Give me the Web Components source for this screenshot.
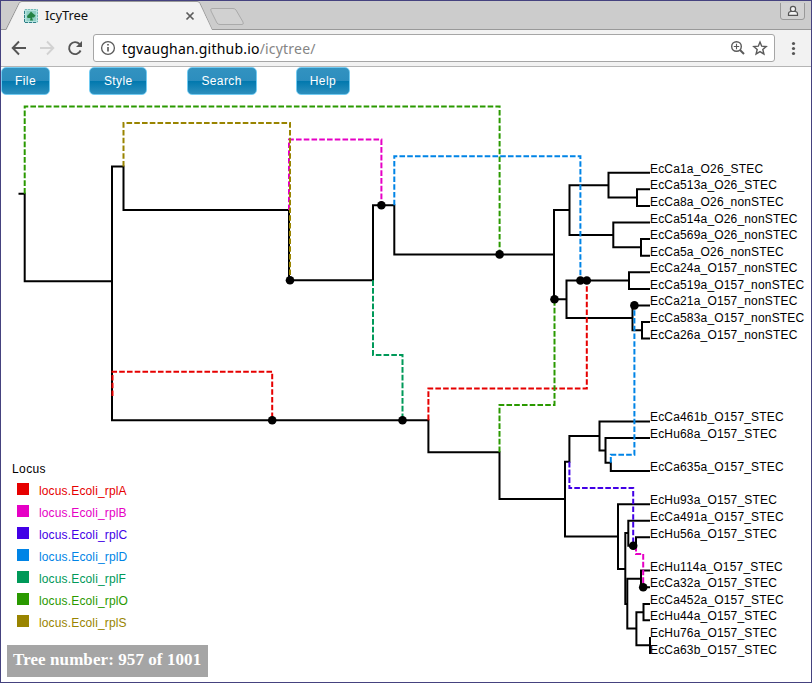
<!DOCTYPE html>
<html lang="en"><head><meta charset="utf-8"><title>IcyTree</title>
<style>html,body{margin:0;height:100%;overflow:hidden;background:#fff}</style></head>
<body>
<browser-window>
  <tab-strip slot="tabs">IcyTree</tab-strip>
  <address-bar slot="bar"><span>tgvaughan.github.io</span><span slot="path">/icytree/</span></address-bar>
  <menu-bar>
    <menu-button style="--w:49px">File</menu-button>
    <menu-button style="--w:58px">Style</menu-button>
    <menu-button style="--w:70px">Search</menu-button>
    <menu-button style="--w:54px">Help</menu-button>
  </menu-bar>
  <tree-canvas>
    <locus-legend></locus-legend>
    <status-box>Tree number: 957 of 1001</status-box>
  </tree-canvas>
</browser-window>
<script>
class Base extends HTMLElement{
  constructor(){super();this.attachShadow({mode:'open'}).innerHTML=this.view()}
}
customElements.define('browser-window',class extends Base{view(){return `
<style>:host{display:flex;flex-direction:column;box-sizing:border-box;width:812px;height:683px;border:1px solid #45427f;background:#fff;overflow:hidden}</style>
<slot name="tabs"></slot><slot name="bar"></slot><slot></slot>`}});

customElements.define('tab-strip',class extends Base{view(){return `
<style>
:host{display:grid;height:29px;flex:none;background:#ccc;font:14px "Noto Sans",sans-serif;color:#111}
svg,.row{grid-area:1/1}
.row{display:flex;align-items:center;height:29px;padding-left:44px}
.t{font-size:13px;line-height:29px;width:140px;letter-spacing:-.1px}
</style>
<svg width="810" height="29" viewBox="1 1 810 29">
<path d="M0 29.5H6L19 3.5Q20 1.500 22 1.500H197Q199 1.500 200 3.500L212 29.500H812" fill="none" stroke="#999"/>
<path d="M6.500 30L19.500 3.500Q20.500 2 22 2H197Q198.500 2 199.500 3.500L212 30Z" fill="#f2f2f2"/>
<path d="M212 8.500H233Q235 8.500 236 10L243 22Q244 24.500 242 24.500H220Q218 24.500 217 23L211 11Q210 8.500 212 8.500Z" fill="#d1d1d1" stroke="#aaa"/>
<rect x="24" y="9" width="14" height="14" rx="1.500" fill="#b5e2de"/><path d="M24.500 11V22.500H37" fill="none" stroke="#2f7d86" stroke-dasharray="3 1"/><path d="M25 9.500H37.500V22" fill="none" stroke="#75b9b8" stroke-dasharray="2 1"/>
<rect x="26.500" y="11" width="9.500" height="10" fill="#8fcfc4"/>
<path d="M31 11.500L33 13.500L35.500 15.500L34 17.500H32L33 20.500H30L30.500 18L27.500 18L27 16L29 14Z" fill="#238243"/>
<path d="M186.500 12.500L193.500 19.500M193.500 12.500L186.500 19.500" stroke="#5c5c5c" stroke-width="1.700"/>
<path d="M780.500 3V17Q780.500 19.500 783 19.500H802Q804.500 19.500 804.500 17V3" fill="#d2d2d2" stroke="#999"/>
<path d="M788.500 15.400V13.800Q788.500 11.500 791 11.500H795Q797.500 11.500 797.500 13.800V15.400Z" fill="#f4f4f4" stroke="#555" stroke-width="1.200"/><circle cx="793" cy="8.900" r="2.600" fill="#f4f4f4" stroke="#555" stroke-width="1.200"/>
</svg><div class="row"><span class="t"><slot></slot></span></div>`}});

customElements.define('address-bar',class extends Base{view(){return `
<style>
:host{display:grid;height:37px;flex:none;background:#f2f2f2;font:14px "Noto Sans",sans-serif;color:#000}
svg,.row{grid-area:1/1}
.row{display:flex;align-items:center;padding:0 0 1px 121px;white-space:nowrap;letter-spacing:.2px}
.p{color:#858585}
</style>
<svg width="810" height="37" viewBox="1 30 810 37">
<rect x="93.500" y="34.500" width="681" height="27" rx="2.500" fill="#fff" stroke="#a6a6a6"/>
<path d="M0 66.500H812" stroke="#b5b5b5"/>
<g fill="none" stroke="#555" stroke-width="1.900"><path d="M26 48H13M19 41.500L12.700 48L19 54.500"/><path stroke="#d2d2d2" d="M40 48H53M47 41.500L53.300 48L47 54.500"/>
<path d="M80.600 50.500A6 6 0 1 1 79.500 44"/></g><path d="M82 41V47H76Z" fill="#555"/>
<circle cx="108" cy="48" r="6.400" fill="none" stroke="#5a5a5a" stroke-width="1.300"/><path d="M107.200 47H108.800V51.500H107.200ZM107.200 44H108.800V45.600H107.200Z" fill="#555"/>
<g fill="none" stroke="#5a5a5a"><circle cx="736.500" cy="46.500" r="4.800" stroke-width="1.400"/><path d="M740 50L744 54" stroke-width="1.900"/><path d="M733.800 46.500H739.200M736.500 43.800V49.200" stroke-width="1.100"/>
<path d="M760 42L761.700 46.200L766.200 46.600L762.800 49.500L763.900 54L760 51.600L756.100 54L757.200 49.500L753.800 46.600L758.300 46.200Z" stroke-width="1.400"/></g>
<g fill="#555"><circle cx="793.500" cy="43.500" r="1.600"/><circle cx="793.500" cy="48.500" r="1.600"/><circle cx="793.500" cy="53.500" r="1.600"/></g>
</svg><div class="row"><slot></slot><span class="p"><slot name="path"></slot></span></div>`}});

customElements.define('menu-bar',class extends Base{view(){return `
<style>:host{display:flex;gap:39.300px;height:28px;flex:none}</style><slot></slot>`}});
customElements.define('menu-button',class extends Base{view(){return `
<style>:host{display:block;box-sizing:border-box;width:var(--w);height:28px;border:1px solid #72cbf2;border-radius:5px;background:linear-gradient(#3292c0,#2d8ebe 48%,#0078ae 50%,#2e8fbd);color:#fff;font:12px/26px "Liberation Sans",Arial,sans-serif;letter-spacing:.4px;text-align:center}</style><slot></slot>`}});

customElements.define('locus-legend',class extends Base{view(){
const rows=[['A','#e60000'],['B','#e600c5'],['C','#4200e6'],['D','#0084e6'],['F','#009959'],['O','#2a9900'],['S','#998400']];
return `<style>
:host{display:block;position:absolute;left:11px;top:367px;font:12px/14px "Liberation Sans",Arial,sans-serif;letter-spacing:.15px;color:#000}
.h{height:22px;letter-spacing:.4px}.r{display:flex;height:22px;gap:10px;padding-left:5.300px}
.r i{width:11.700px;height:11.700px;margin-top:-.6px}.r span{display:block}
</style><div class="h">Locus</div>${rows.map(([n,c])=>`<div class="r"><i style="background:${c}"></i><span style="color:${c}">locus.Ecoli_rpl${n}</span></div>`).join('')}`}});
customElements.define('status-box',class extends Base{view(){return `
<style>:host{display:block;position:absolute;left:6px;top:550px;width:201px;height:32px;box-sizing:border-box;padding-left:6px;background:#a5a5a5;color:#fff;font:bold 17px/30px "Liberation Serif",serif;letter-spacing:.08px;white-space:nowrap}</style><slot></slot>`}});

customElements.define('tree-canvas',class extends Base{view(){
const edges=[
'M18.500 193.700H24.700V281.200H112','M289 210H123.500V166.500H112V420.200H428.400V452.200H499.500V499H565','M289 209V280.300H373V205.300H394.300V254.400H554',
'M554 299.200V210H569.500M608.500 185.200H569.500V235H613.300','M650 172.700H608.500V197.500H637M650 189.200H637V206H650',
'M650 222.500H613.300V247.300H641M650 239H641V255.700H650','M554 299.200H566.500M629 280.500H566.500V318H632.500',
'M650 272.300H629V289H650','M650 305.400H632.500V330.300H642M650 322H642V338.600H650',
'M599.500 436H569.400V461.800H565V536.500H618',
'M650 421.400H599.500V450.500H605.500M650 438H605.500V462.700H610.800V471H650','M650 504.200H618V569H625.300',
'M628.300 533H625.300V604H627.300M650 520.700H628.300V545.800H636V537.300H650','M641 578.800H627.300V628.600H636.400',
'M650 570.500H641V587.300H650','M643.500 612.300H636.400V645.300H650M650 604H643.500V620.300H650','M650 637V654'];
const recomb=[
['#2a9900','M24.700 193.700V106.400H499.600V254.400'],['#e600c5','M289 210V139.500H381.400V205.300'],['#998400','M123.500 166.500V123H290V280.300'],
['#0084e6','M394.300 205.300V156.200H580.400V280.500'],['#009959','M373 280.300V355H402.500V420.200'],
['#e60000','M112.500 396V371.700H272.200V420.200'],['#e60000','M428.400 420.200V388.400H586.800V280.500'],
['#2a9900','M499.500 452.200V404.900H554.500V299.200'],['#0084e6','M610.800 462.700V454.800H634.400V305.400'],
['#4200e6','M569.400 461.800V487.900H633.200V545.800'],['#e600c5','M636 545.800V554H643.200V587.300']];
const dots=[[290,280.300],[381.400,205.300],[499.600,254.400],[580.400,280.500],[586.800,280.500],[554.500,299.200],[634.400,305.400],[272.200,420.200],[402.500,420.200],[633.200,545.800],[643.200,587.300]];
const leaves=[['EcCa1a_O26_STEC',173],['EcCa513a_O26_STEC',189],['EcCa8a_O26_nonSTEC',206],['EcCa514a_O26_nonSTEC',223],['EcCa569a_O26_nonSTEC',239],['EcCa5a_O26_nonSTEC',256],['EcCa24a_O157_nonSTEC',272],['EcCa519a_O157_nonSTEC',289],['EcCa21a_O157_nonSTEC',305],['EcCa583a_O157_nonSTEC',322],['EcCa26a_O157_nonSTEC',339],['EcCa461b_O157_STEC',421],['EcHu68a_O157_STEC',438],['EcCa635a_O157_STEC',471],['EcHu93a_O157_STEC',504],['EcCa491a_O157_STEC',521],['EcHu56a_O157_STEC',538],['EcHu114a_O157_STEC',571],['EcCa32a_O157_STEC',587],['EcCa452a_O157_STEC',604],['EcHu44a_O157_STEC',620],['EcHu76a_O157_STEC',637],['EcCa63b_O157_STEC',654]];
return `<style>:host{display:block;position:relative;height:587px;flex:none}svg{display:block}text{font:12px "Liberation Sans",Arial,sans-serif;letter-spacing:.17px;fill:#000}</style>
<svg width="810" height="587" viewBox="1 95 810 587">
<g fill="none" stroke="#000" stroke-width="2">${edges.map(d=>`<path d="${d}"/>`).join('')}</g>
<g fill="none" stroke-width="2" stroke-dasharray="5.600 2.150">${recomb.map(([c,d])=>`<path stroke="${c}" d="${d}"/>`).join('')}</g>
${dots.map(([x,y])=>`<circle cx="${x}" cy="${y}" r="4.300"/>`).join('')}
${leaves.map(([t,y])=>`<text x="650" y="${y}">${t}</text>`).join('')}
</svg><slot></slot>`}});
</script>
</body></html>
